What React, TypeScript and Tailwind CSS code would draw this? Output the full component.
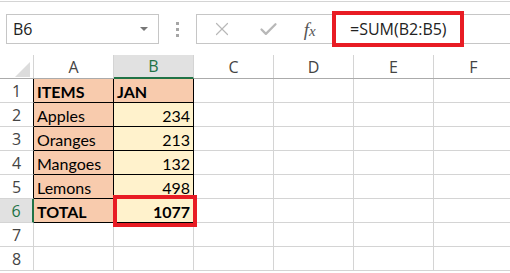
import { X, Check } from 'lucide-react';

const cols = ['A', 'B', 'C', 'D', 'E', 'F'];

const rows = [
  { n: 1, a: 'ITEMS', b: 'JAN', bold: true, head: true },
  { n: 2, a: 'Apples', b: '234' },
  { n: 3, a: 'Oranges', b: '213' },
  { n: 4, a: 'Mangoes', b: '132' },
  { n: 5, a: 'Lemons', b: '498' },
  { n: 6, a: 'TOTAL', b: '1077', bold: true },
  { n: 7 },
  { n: 8 },
];

const ui = { fontFamily: '"Open Sans", "Liberation Sans", sans-serif' };
const cell = { fontFamily: 'Lato, "Liberation Sans", sans-serif' };

function FxIcon() {
  return (
    <span
      className="text-[19px] italic text-[#555] leading-none"
      style={{ fontFamily: '"Liberation Serif", serif' }}
    >
      f<span className="text-[15px]">x</span>
    </span>
  );
}

export default function App() {
  return (
    <div className="relative w-[510px] h-[273px] overflow-hidden bg-white" style={ui}>
      {/* Formula bar */}
      <div className="h-[55px] pt-px">
        <div className="border-t border-[#d4d4d4] h-[54px] pt-[12px]">
          <div className="flex items-center h-[30px]">
            <div className="ml-[6px] w-[153px] h-[30px] border border-[#c6c6c6] flex items-center justify-between pl-[6px] pr-[10px]">
              <span className="text-[16px] text-[#222]">B6</span>
              <span className="w-0 h-0 border-l-[4px] border-r-[4px] border-t-[4px] border-l-transparent border-r-transparent border-t-[#777]" />
            </div>
            <div className="w-[37px] flex flex-col items-center gap-[3px]">
              <span className="w-[3px] h-[3px] bg-[#a6a6a6]" />
              <span className="w-[3px] h-[3px] bg-[#a6a6a6]" />
              <span className="w-[3px] h-[3px] bg-[#a6a6a6]" />
            </div>
            <div className="flex-1 h-[30px] border-t border-b border-l border-[#c6c6c6] flex items-center">
              <div className="w-[135px] flex items-center justify-around pl-[2px] pr-[4px]">
                <X className="w-[22px] h-[22px] text-[#b8b8b8]" strokeWidth={1.3} />
                <Check className="w-[21px] h-[21px] text-[#b8b8b8]" strokeWidth={2.6} />
                <FxIcon />
              </div>
              <span className="ml-[18px] text-[16px] text-[#222]">=SUM(B2:B5)</span>
            </div>
          </div>
        </div>
      </div>

      {/* Column headers */}
      <div className="flex h-[24px] border-b border-[#ababab]">
        <div className="relative w-[34px] shrink-0 border-r border-[#d4d4d4]">
          <svg className="absolute right-[3px] bottom-[1px]" width="15" height="15">
            <polygon points="15,0 15,15 0,15" fill="#dcdcdc" />
          </svg>
        </div>
        {cols.map((c) => (
          <div
            key={c}
            className={
              c === 'B'
                ? 'w-[80px] shrink-0 border-r border-[#d4d4d4] bg-[#e1e1e1] border-b-2 border-b-[#217346] -mb-px flex items-center justify-center text-[16px] text-[#217346]'
                : 'w-[80px] shrink-0 border-r border-[#d4d4d4] flex items-center justify-center text-[16px] text-[#444]'
            }
          >
            {c}
          </div>
        ))}
      </div>

      {/* Rows */}
      {rows.map((r) => {
        const data = r.n <= 6;
        return (
          <div key={r.n} className="flex h-[24px]">
            <div
              className={
                r.n === 6
                  ? 'w-[34px] shrink-0 border-b border-[#d4d4d4] border-r-2 border-r-[#217346] bg-[#e1e1e1] flex items-center justify-center text-[16px] text-[#217346]'
                  : data
                  ? 'w-[34px] shrink-0 border-b border-[#d4d4d4] border-r border-r-black flex items-center justify-center text-[16px] text-[#444]'
                  : 'w-[34px] shrink-0 border-b border-r border-[#d4d4d4] flex items-center justify-center text-[16px] text-[#444]'
              }
            >
              {r.n}
            </div>
            {data ? (
              <>
                <div
                  className={`w-[80px] shrink-0 border-r border-b border-black bg-[#f8cbad] flex items-end pl-[3px] text-[16px] leading-[20px] text-black ${r.bold ? 'font-bold' : ''}`}
                  style={cell}
                >
                  {r.a}
                </div>
                <div
                  className={`w-[80px] shrink-0 border-r border-b border-black flex items-end text-[16px] leading-[20px] text-black ${r.head ? 'bg-[#f8cbad] justify-start pl-[3px]' : 'bg-[#fff2cc] justify-end pr-[3px]'} ${r.bold ? 'font-bold' : ''}`}
                  style={cell}
                >
                  {r.b}
                </div>
              </>
            ) : (
              <>
                <div className="w-[80px] shrink-0 border-r border-b border-[#d4d4d4]" />
                <div className="w-[80px] shrink-0 border-r border-b border-[#d4d4d4]" />
              </>
            )}
            <div className="w-[80px] shrink-0 border-r border-b border-[#d4d4d4]" />
            <div className="w-[80px] shrink-0 border-r border-b border-[#d4d4d4]" />
            <div className="w-[80px] shrink-0 border-r border-b border-[#d4d4d4]" />
            <div className="w-[80px] shrink-0 border-r border-b border-[#d4d4d4]" />
          </div>
        );
      })}

      {/* Red annotation boxes */}
      <div className="absolute left-[332px] top-[11px] w-[132px] h-[36px] border-[4px] border-[#e81c24]" />
      <div className="absolute left-[113px] top-[195px] w-[84px] h-[32px] border-[4px] border-[#e81c24]" />
    </div>
  );
}
